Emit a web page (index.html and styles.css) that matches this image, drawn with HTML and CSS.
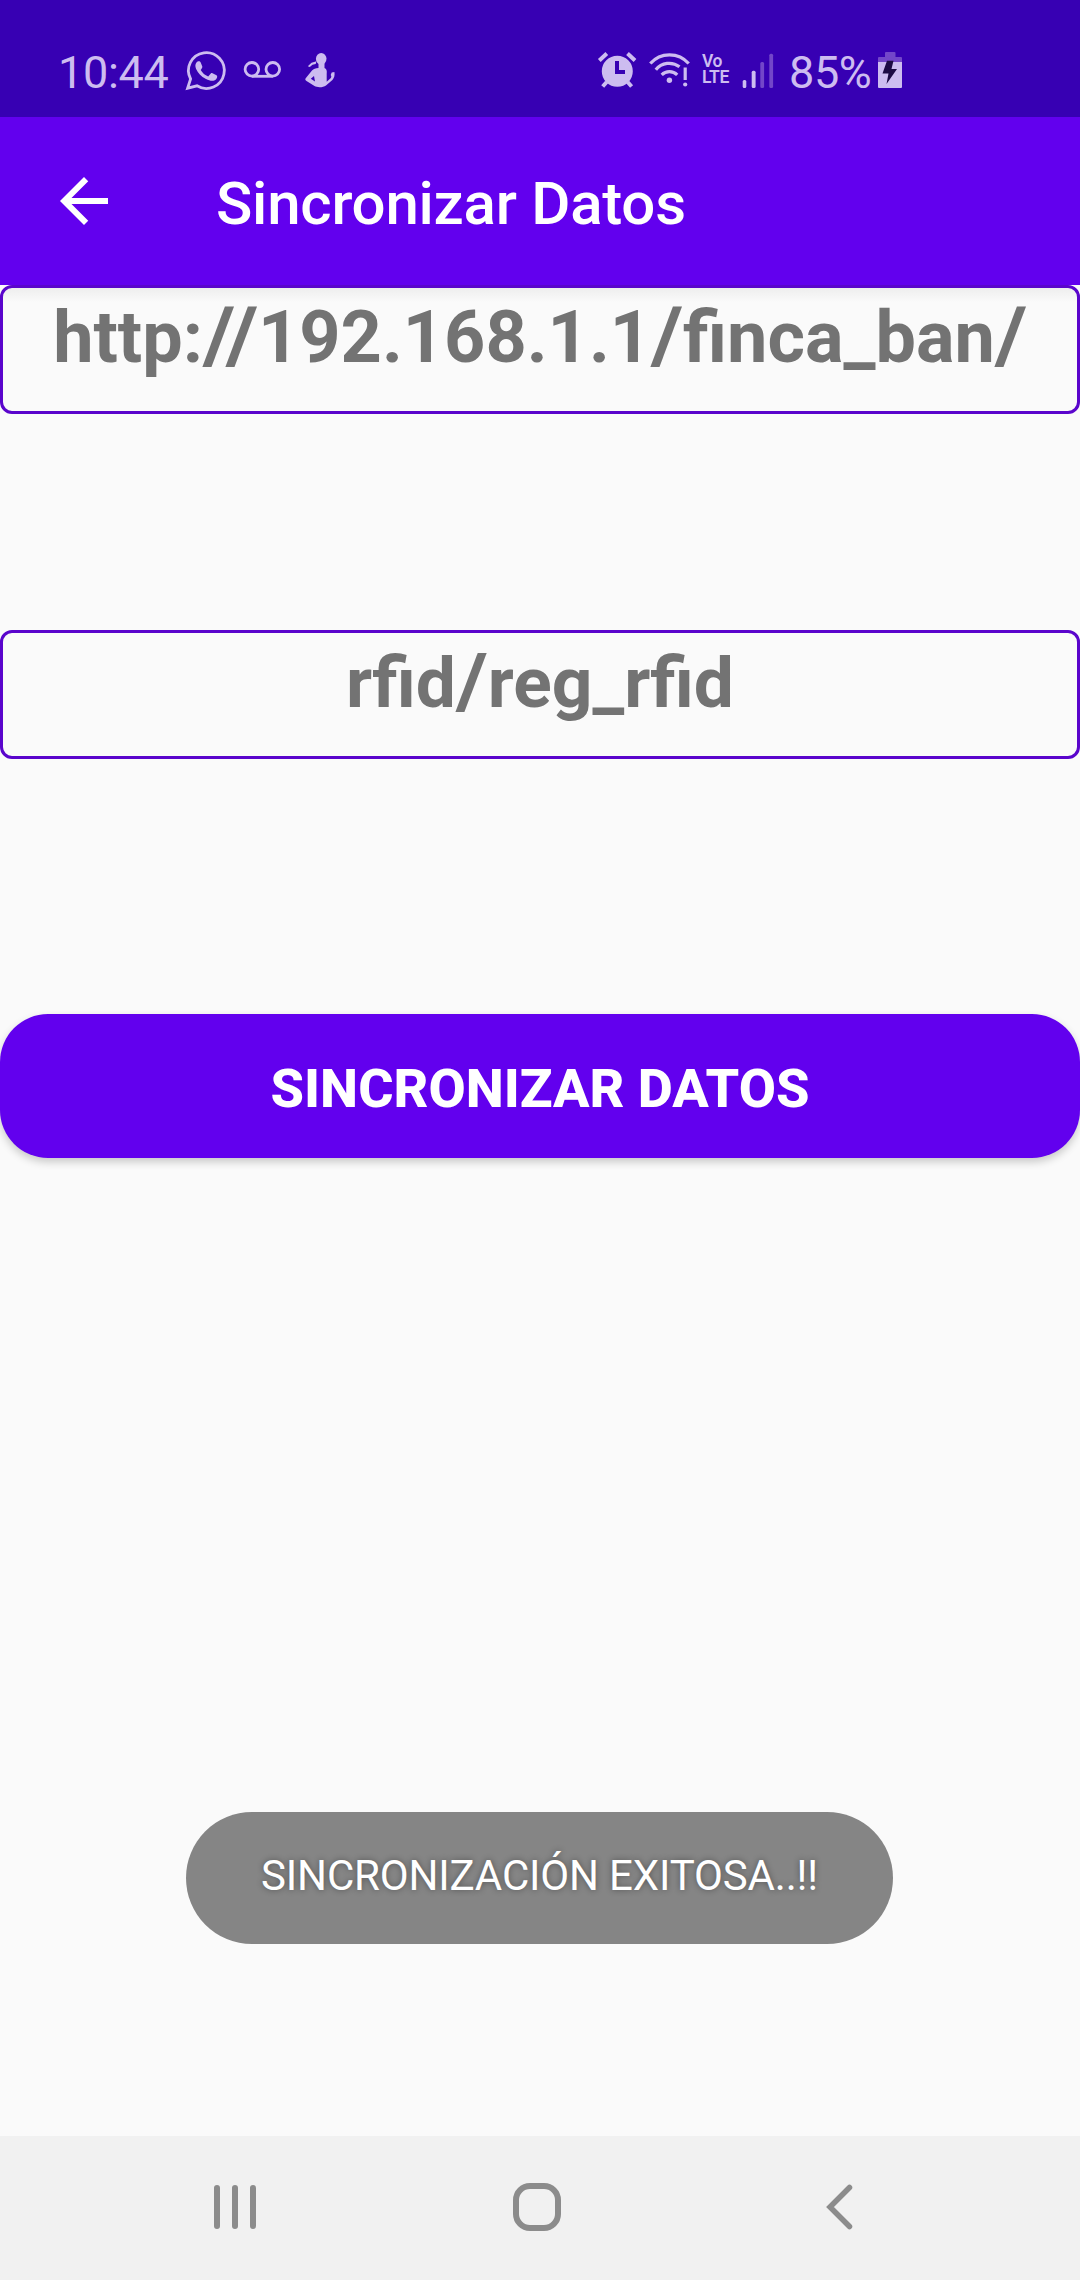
FILE: index.html
```html
<!DOCTYPE html>
<html lang="es">
<head>
<meta charset="utf-8">
<title>Sincronizar Datos</title>
<link rel="stylesheet" href="styles.css">
</head>
<body>
<div class="screen">
  <header class="status">
    <span class="time">10:44</span>
    <svg class="whatsapp" width="44" height="117" viewBox="184 0 44 117" fill="none">
      <path d="M187.600 88.200L190.600 79A17.900 17.900 0 1 1 197 85.800Z" stroke="currentColor" stroke-width="2.800"/>
      <path d="M196.300 62.800c1.700-2 3.700-1.800 4.400-.2l1.600 4c.4 1-1 2.600-1.600 3.300 1.700 3 4.300 5.200 7.500 6.500l2.600-2.900c.6-.6 1-.5 1.700-.2l4 2c1 .6 1 2.500-.4 3.900-2.500 2.500-6 1.800-10.100-.2-5-2.500-8.200-6.400-9.900-10.100-1.100-2.600-.9-4.600.2-6.100Z" fill="currentColor"/>
    </svg>
    <svg class="voicemail" width="40" height="117" viewBox="243 0 40 117" fill="none" stroke="currentColor" stroke-width="2.800">
      <circle cx="251.900" cy="69.300" r="6.800"/><circle cx="272.800" cy="69.300" r="6.800"/><path d="M251.900 76.300h20.900"/>
    </svg>
    <svg class="person" width="34" height="117" viewBox="303 0 34 117" fill="currentColor">
      <ellipse cx="321.200" cy="58.800" rx="5.300" ry="5.800"/>
      <path d="M307.800 66.300l3.700-3.500 5-1.500-.8 2.700-3.200.8-2.700 2.200Z"/>
      <path fill-rule="evenodd" d="M318.500 62h6v6c2.500 1 2.500 3.500 2.200 6v7.800l3.600-3.300c1.200-1.200 1.400-2 .4-3.500l1-2.500 2.700-.5c.6 3-.2 6-2 8l-6.400 5.500c-3 2.300-9 2.200-11.500.6l-8-5.200c-1.500-1-1.500-2-.6-3l6.100-7.400c1.500-1.600 3.500-2.500 6.500-2.500Zm-4.500 14l-3.200 2.800 4.200 2.700Z"/>
    </svg>
    <svg class="alarm" width="42" height="117" viewBox="596 0 42 117" fill="currentColor">
      <path fill-rule="evenodd" d="M617.300 55.800a15.500 15.500 0 1 1 0 31a15.500 15.500 0 1 1 0-31ZM615 61v13h10v-4h-6v-9Z"/>
      <path d="M599.300 60.500l7.500-7M635 60.500l-7.500-7M602.700 86.500l4-4.500M631.600 86.500l-4-4.500" stroke="currentColor" stroke-width="4"/>
    </svg>
    <svg class="wifi" width="44" height="117" viewBox="648 0 44 117" fill="none" stroke="currentColor" stroke-width="3.200">
      <path d="M650.300 63.500A25.500 25.500 0 0 1 688.700 63.500M655.800 69.800A17 17 0 0 1 679.500 66.800M661.700 74.800A11 11 0 0 1 677.200 74.800M685.200 67.500v12.500"/>
      <circle cx="669.400" cy="80.300" r="2.700" fill="currentColor" stroke="none"/><circle cx="685.200" cy="84.500" r="2.100" fill="currentColor" stroke="none"/>
    </svg>
    <span class="volte"><span>Vo</span><span>LTE</span></span>
    <svg class="signal" width="34" height="117" viewBox="741 0 34 117" fill="currentColor">
      <rect x="742.700" y="80" width="3.600" height="8" rx="1.500"/><rect x="751.700" y="70.700" width="3.900" height="17.300" rx="1.500"/>
      <rect class="dim" x="760.300" y="62" width="3.800" height="26" rx="1.500"/><rect class="dim" x="769.300" y="53.700" width="3.800" height="34.300" rx="1.500"/>
    </svg>
    <span class="percent">85%</span>
    <svg class="battery" width="26" height="117" viewBox="877 0 26 117" fill="currentColor">
      <path class="dim" d="M885 57v-4q0-1 1-1h8.500q1 0 1 1v4h5.500q1 0 1 1v4h-24v-4q0-1 1-1Z"/>
      <path d="M878 62h24v25q0 1-1 1h-22q-1 0-1-1Z"/>
      <path class="bolt" d="M887 60.700h6.500l-2 8.300h5.500L886.500 84l2-10.500H882.500Z"/>
    </svg>
  </header>
  <nav class="appbar">
    <svg class="back-arrow" width="72" height="72" viewBox="0 0 24 24" fill="currentColor"><path d="M20 11H7.830l5.590-5.590L12 4l-8 8 8 8 1.410-1.410L7.830 13H20v-2z"/></svg>
    <h1 class="title">Sincronizar Datos</h1>
  </nav>
  <main class="content">
    <div class="field field-url">http:<span class="slash">/</span><span class="slash slash-tight">/</span>192.168.1.1<span class="slash">/</span>finca_ban<span class="slash">/</span></div>
    <div class="field field-path">rfid<span class="slash">/</span>reg_rfid</div>
    <button class="sync">SINCRONIZAR DATOS</button>
    <div class="toast">SINCRONIZACIÓN EXITOSA..!!</div>
  </main>
  <footer class="navbar">
    <svg width="44" height="48" viewBox="0 0 44 48" stroke="currentColor" stroke-width="6" stroke-linecap="round"><path d="M4 5v38M22 5v38M40 5v38"/></svg>
    <svg class="home" width="48" height="48" viewBox="0 0 48 48" fill="none" stroke="currentColor" stroke-width="6"><rect x="3" y="3" width="42" height="42" rx="14"/></svg>
    <svg class="back" width="28" height="48" viewBox="0 0 28 48" fill="none" stroke="currentColor" stroke-width="5.500" stroke-linecap="round"><path d="M24.500 4.500L5 24l19.500 19.500"/></svg>
  </footer>
</div>
</body>
</html>
```
FILE: styles.css
```css
* { box-sizing: border-box; }

body {
  margin: 0;
  background: #fafafa;
  font-family: Roboto, sans-serif;
}

svg { display: block; flex: none; }

.screen {
  width: 1080px;
  height: 2280px;
  display: flex;
  flex-direction: column;
  overflow: hidden;
}

.status {
  height: 117px;
  flex: none;
  display: flex;
  padding-left: 58px;
  background: #3700b3;
  color: #cdbcf0;
  font-size: 45px;
  line-height: 145px;
  white-space: nowrap;
}

.time {
  width: 126px;
  letter-spacing: -.3px;
}

.voicemail { margin-left: 15px; }
.person { margin-left: 20px; }
.alarm { margin-left: 259px; }
.wifi { margin-left: 10px; }

.volte {
  width: 30px;
  margin: 54px 0 0 10px;
  display: flex;
  flex-direction: column;
  font-size: 17.5px;
  font-weight: 600;
  line-height: 15.5px;
  letter-spacing: -.4px;
}

.signal { margin-left: 9px; }

.percent {
  width: 88px;
  margin-left: 14px;
  letter-spacing: -.4px;
}

.dim { fill: #7346c9; }
.bolt { fill: #1d0b45; }

.appbar {
  height: 168px;
  flex: none;
  display: flex;
  align-items: center;
  padding-left: 48px;
  background: #6200ee;
  color: #fff;
}

.title {
  margin: 5px 0 0 96px;
  font-size: 60px;
  font-weight: 500;
  line-height: 70px;
  letter-spacing: -.24px;
}

.content {
  flex: 1;
  display: flex;
  flex-direction: column;
}

.field {
  height: 129px;
  margin-bottom: 216px;
  border: 3px solid #5a05cc;
  border-radius: 12px;
  color: #737373;
  font-size: 72px;
  font-weight: 700;
  line-height: 99px;
  text-align: center;
  white-space: nowrap;
}

.field-url { background: linear-gradient(#eee, #fafafa 14px); }
.field-path { font-size: 71.3px; }

/* wide slash, scaled from the baseline */
.slash {
  display: inline-block;
  width: 32px;
  transform: scale(1.2, 1.07);
  transform-origin: 50% 74px;
}

.slash-tight { margin-left: -9px; }

.sync {
  height: 144px;
  margin-top: 39px;
  padding: 5px 0 0;
  border: 0;
  border-radius: 48px;
  background: #6200ee;
  box-shadow: 0 4px 8px rgba(0, 0, 0, .2);
  color: #fff;
  font: 800 54px/64px Roboto, sans-serif;
}

.toast {
  width: 707px;
  height: 132px;
  margin: 654px 0 0 186px;
  border-radius: 66px;
  background: #858585;
  color: #fff;
  font-size: 42px;
  line-height: 127px;
  letter-spacing: -.16px;
  text-align: center;
  text-shadow: 0 0 6px rgba(0, 0, 0, .4);
}

.navbar {
  height: 144px;
  flex: none;
  display: flex;
  align-items: center;
  padding: 0 0 2px 213px;
  background: #f1f1f1;
  color: #8c8c8c;
}

.home { margin-left: 256px; }
.back { margin-left: 264px; }
```
